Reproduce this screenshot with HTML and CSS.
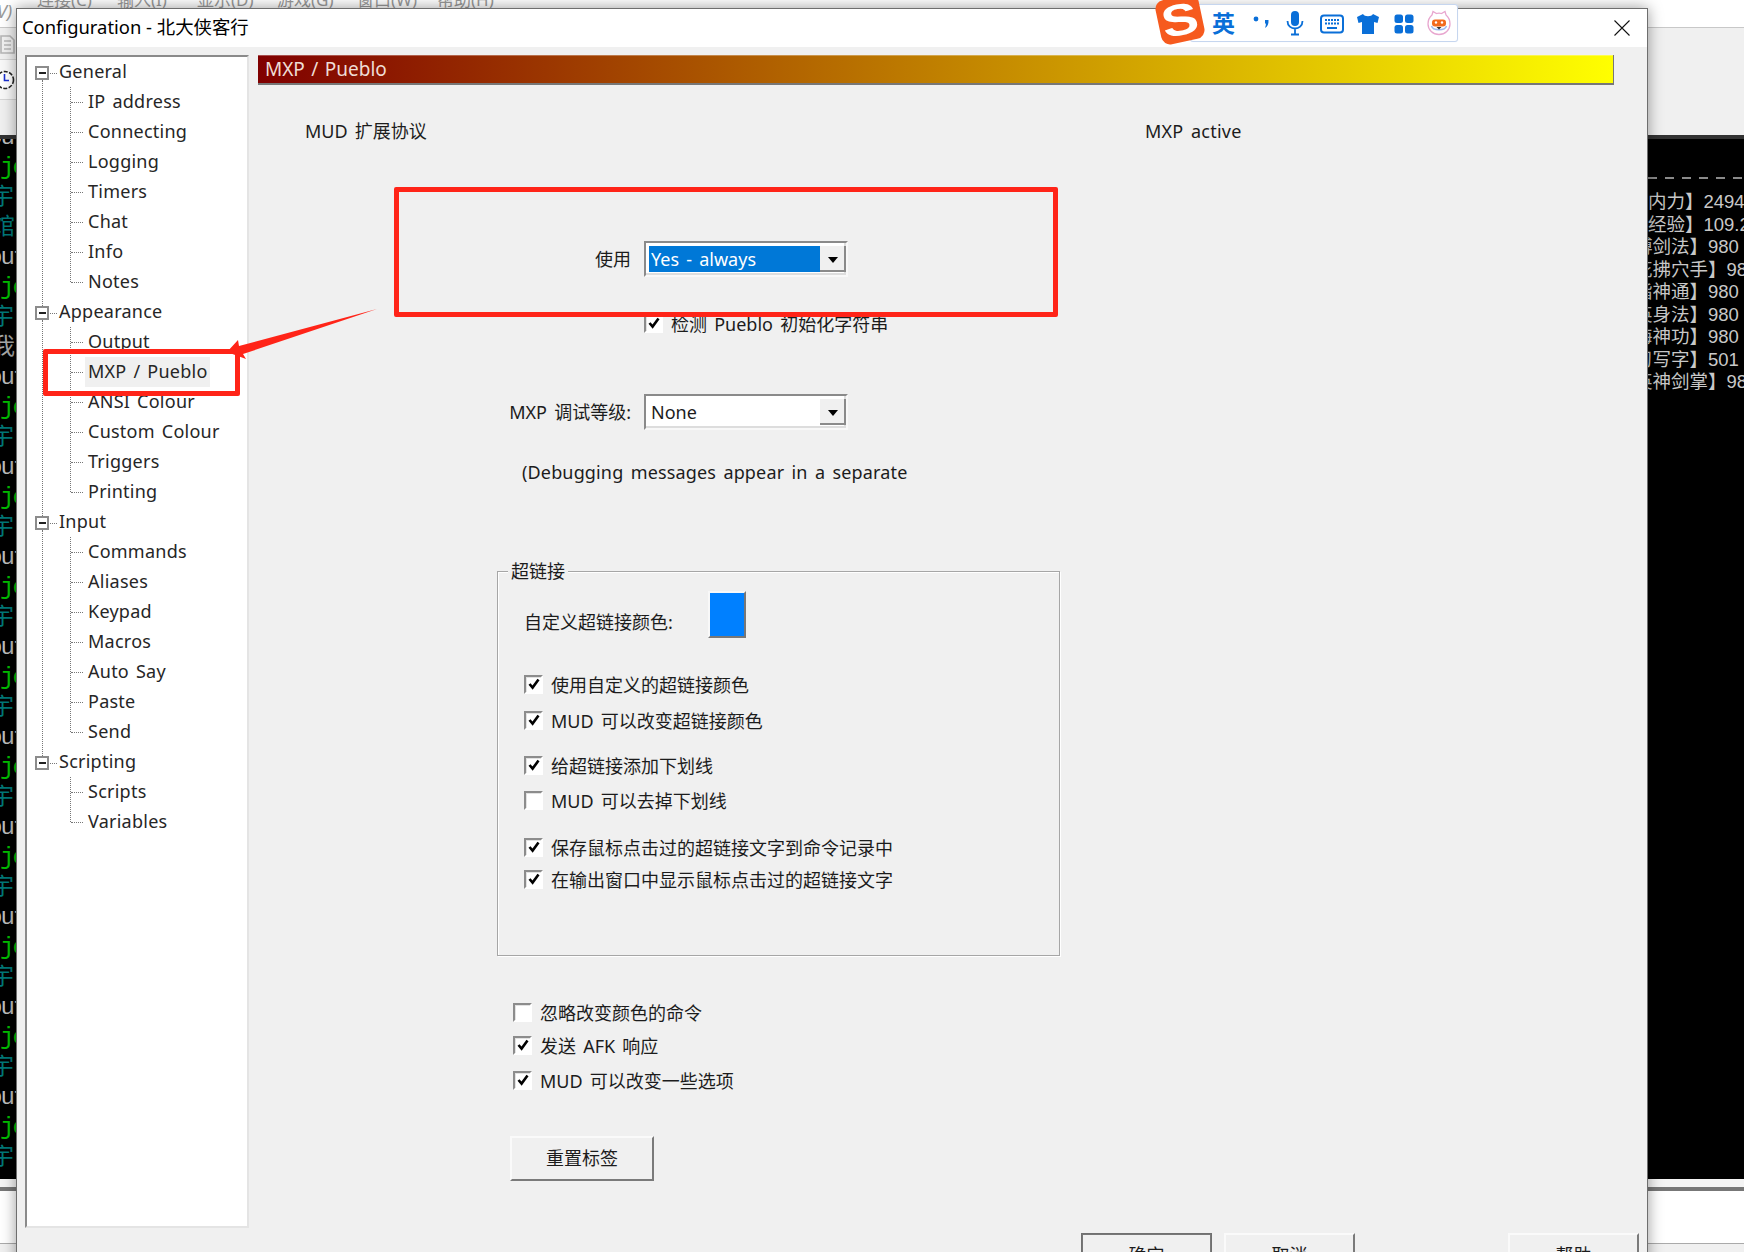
FILE: index.html
```html
<!DOCTYPE html>
<html lang="zh">
<head>
<meta charset="utf-8">
<title>Configuration - 北大侠客行</title>
<link rel="stylesheet" href="styles.css">
</head>
<body>
<svg class="defs" width="0" height="0" aria-hidden="true">
  <symbol id="tick" viewBox="0 0 14 14"><path d="M2.5 7 L5.6 10.6 L11.5 2.6" fill="none" stroke="#000" stroke-width="2.6"/></symbol>
</svg>
<div class="app">
  <div class="bg">
    <div class="menubar">
      <div class="menu-corner">V)</div>
      <div class="menu-items"><span>连接(C)</span><span>输入(I)</span><span>显示(D)</span><span>游戏(G)</span><span>窗口(W)</span><span>帮助(H)</span></div>
    </div>
    <div class="toolbar">
      <div class="tool-row tool-row-a"><svg width="16" height="22" viewBox="0 0 16 22"><path d="M1 3h9l4 4v13H1zM4 8h7M4 12h7M4 16h7" fill="none" stroke="#b5b5b5" stroke-width="1.6"/></svg></div>
      <div class="tool-row tool-row-b"><svg width="16" height="30" viewBox="0 0 16 30"><circle cx="5" cy="15" r="8.5" fill="#fff" stroke="#222" stroke-width="1.6" stroke-dasharray="4 1.5"/><path d="M4.5 9v6.500h4.500" fill="none" stroke="#1a2fd0" stroke-width="1.6"/></svg></div>
      <div class="tool-row tool-row-c"></div>
    </div>
    <div class="terminal">
      <div class="term-left">
        <div class="tl u">out</div><div class="tl j">jo</div><div class="tl c">宗宇</div><div class="tl c">馆</div>
        <div class="tl u">out</div><div class="tl j">jo</div><div class="tl c">宗宇</div><div class="tl w">我</div>
        <div class="tl u">out</div><div class="tl j">jo</div><div class="tl c">宗宇</div>
        <div class="tl u">out</div><div class="tl j">jo</div><div class="tl c">宗宇</div>
        <div class="tl u">out</div><div class="tl j">jo</div><div class="tl c">宗宇</div>
        <div class="tl u">out</div><div class="tl j">jo</div><div class="tl c">宗宇</div>
        <div class="tl u">out</div><div class="tl j">jo</div><div class="tl c">宗宇</div>
        <div class="tl u">out</div><div class="tl j">jo</div><div class="tl c">宗宇</div>
        <div class="tl u">out</div><div class="tl j">jo</div><div class="tl c">宗宇</div>
        <div class="tl u">out</div><div class="tl j">jo</div><div class="tl c">宗宇</div>
        <div class="tl u">out</div><div class="tl j">jo</div><div class="tl c">宗宇</div>
      </div>
      <div class="term-right">
        <div class="term-dash"></div>
        <div class="tr">内力】2494</div>
        <div class="tr">经验】109.2</div>
        <div class="tr tr-shift">博剑法】980</div>
        <div class="tr tr-shift">花拂穴手】98</div>
        <div class="tr tr-shift">指神通】980</div>
        <div class="tr tr-shift">英身法】980</div>
        <div class="tr tr-shift">海神功】980</div>
        <div class="tr tr-shift">习写字】501</div>
        <div class="tr tr-shift">英神剑掌】98</div>
      </div>
    </div>
    <div class="inputbar"></div>
    <div class="statusbar"></div>
  </div>

  <div class="dialog">
    <div class="titlebar">
      <span class="title">Configuration - 北大侠客行</span>
      <svg class="close" width="16" height="16" viewBox="0 0 16 16"><path d="M.5.500l15 15M15.500.500l-15 15" stroke="#111" stroke-width="1.100" fill="none"/></svg>
    </div>
    <div class="dlg-body">
      <ul class="tree">
        <li class="node"><div class="row top"><i class="exp"></i>General</div>
          <ul class="kids">
            <li class="row kid">IP address</li><li class="row kid">Connecting</li><li class="row kid">Logging</li><li class="row kid">Timers</li><li class="row kid">Chat</li><li class="row kid">Info</li><li class="row kid">Notes</li>
          </ul>
        </li>
        <li class="node"><div class="row top"><i class="exp"></i>Appearance</div>
          <ul class="kids">
            <li class="row kid">Output</li><li class="row kid"><span class="sel">MXP / Pueblo</span></li><li class="row kid">ANSI Colour</li><li class="row kid">Custom Colour</li><li class="row kid">Triggers</li><li class="row kid">Printing</li>
          </ul>
        </li>
        <li class="node"><div class="row top"><i class="exp"></i>Input</div>
          <ul class="kids">
            <li class="row kid">Commands</li><li class="row kid">Aliases</li><li class="row kid">Keypad</li><li class="row kid">Macros</li><li class="row kid">Auto Say</li><li class="row kid">Paste</li><li class="row kid">Send</li>
          </ul>
        </li>
        <li class="node"><div class="row top"><i class="exp"></i>Scripting</div>
          <ul class="kids">
            <li class="row kid">Scripts</li><li class="row kid">Variables</li>
          </ul>
        </li>
      </ul>

      <div class="panel">
        <div class="banner">MXP / Pueblo</div>
        <div class="head-row"><span class="head-a">MUD 扩展协议</span><span class="head-b">MXP active</span></div>
        <div class="field field-use">
          <label class="field-label">使用</label>
          <div class="combo"><span class="combo-val combo-sel">Yes - always</span><span class="combo-btn"></span></div>
        </div>
        <div class="check check-pueblo"><span class="box"><svg class="tick"><use href="#tick"/></svg></span>检测 Pueblo 初始化字符串</div>
        <div class="field field-debug">
          <label class="field-label">MXP 调试等级:</label>
          <div class="combo"><span class="combo-val">None</span><span class="combo-btn"></span></div>
        </div>
        <div class="note">(Debugging messages appear in a separate</div>

        <div class="group">
          <div class="legend">超链接</div>
          <div class="swatch-row"><span class="swatch-label">自定义超链接颜色:</span><span class="swatch"></span></div>
          <div class="check g1"><span class="box"><svg class="tick"><use href="#tick"/></svg></span>使用自定义的超链接颜色</div>
          <div class="check g2"><span class="box"><svg class="tick"><use href="#tick"/></svg></span>MUD 可以改变超链接颜色</div>
          <div class="check g3"><span class="box"><svg class="tick"><use href="#tick"/></svg></span>给超链接添加下划线</div>
          <div class="check g4"><span class="box"></span>MUD 可以去掉下划线</div>
          <div class="check g5"><span class="box"><svg class="tick"><use href="#tick"/></svg></span>保存鼠标点击过的超链接文字到命令记录中</div>
          <div class="check g6"><span class="box"><svg class="tick"><use href="#tick"/></svg></span>在输出窗口中显示鼠标点击过的超链接文字</div>
        </div>

        <div class="check b1"><span class="box"></span>忽略改变颜色的命令</div>
        <div class="check b2"><span class="box"><svg class="tick"><use href="#tick"/></svg></span>发送 AFK 响应</div>
        <div class="check b3"><span class="box"><svg class="tick"><use href="#tick"/></svg></span>MUD 可以改变一些选项</div>

        <div class="btn btn-reset">重置标签</div>
        <div class="footer">
          <div class="btn btn-foot btn-default">确定</div>
          <div class="btn btn-foot">取消</div>
          <div class="btn btn-foot btn-help">帮助</div>
        </div>
      </div>
    </div>
  </div>

  <div class="ime">
    <div class="ime-logo"><span>S</span></div>
    <span class="ime-ying">英</span>
    <svg class="ime-ic ic-punc" width="18" height="20" viewBox="0 0 18 20"><circle cx="4" cy="8" r="2.400" fill="#0a6fd8"/><path d="M13 9h3.500c.3 4-1 6.500-3.500 8 .8-2 1-3.500 .8-4.500H13z" fill="#0a6fd8"/></svg>
    <svg class="ime-ic ic-mic" width="20" height="26" viewBox="0 0 20 26"><rect x="6" y="1" width="8" height="15" rx="4" fill="#0a6fd8"/><path d="M2.500 11c0 10 15 10 15 0M10 19v5M6 24.500h8" fill="none" stroke="#0a6fd8" stroke-width="1.800"/></svg>
    <svg class="ime-ic ic-kbd" width="24" height="20" viewBox="0 0 24 20"><rect x="1" y="1.500" width="22" height="17" rx="3" fill="#fff" stroke="#0a6fd8" stroke-width="2"/><path d="M5 6h14M5 9.500h14" stroke="#0a6fd8" stroke-width="2" stroke-dasharray="2 1"/><path d="M7 14h10" stroke="#0a6fd8" stroke-width="2"/></svg>
    <svg class="ime-ic ic-shirt" width="24" height="22" viewBox="0 0 24 22"><path d="M7 1 L1 4 L2.500 10 L6 9 V21 H18 V9 L21.500 10 L23 4 L17 1 C15.500 4 8.500 4 7 1Z" fill="#0a6fd8"/></svg>
    <svg class="ime-ic ic-grid" width="20" height="20" viewBox="0 0 20 20"><rect x="0.500" y="0.500" width="8.500" height="8.500" rx="2.500" fill="#0a6fd8"/><rect x="11" y="0.500" width="8.500" height="8.500" rx="2.500" fill="#0a6fd8"/><rect x="0.500" y="11" width="8.500" height="8.500" rx="2.500" fill="#0a6fd8"/><rect x="11" y="11" width="8.500" height="8.500" rx="2.500" fill="#0a6fd8"/></svg>
    <svg class="ime-ic ic-face" width="24" height="26" viewBox="0 0 24 26"><path d="M5 5 L6 1.500 L9.500 3.500 C11 3 13 3 14.500 3.500 L18 1.500 L19 5 C22 7.500 23 10.500 23 14 C23 20 18 24.500 12 24.500 C6 24.500 1 20 1 14 C1 10.500 2 7.500 5 5Z" fill="#fff" stroke="#e8a6cf" stroke-width="1.300"/><path d="M4.500 16 C6 21 18 21 19.500 16" fill="none" stroke="#9db8f0" stroke-width="1.500"/><rect x="5" y="9.500" width="14" height="7" rx="3" fill="#f26b1d"/><circle cx="9" cy="12.500" r="1.200" fill="#fff"/><circle cx="15" cy="12.500" r="1.200" fill="#fff"/><path d="M9.500 17h5l-2.500 2.500z" fill="#333"/></svg>
  </div>

  <div class="mark mark-combo"></div>
  <div class="mark mark-tree"></div>
  <svg class="arrow" width="160" height="60" viewBox="0 0 160 60"><path d="M151 1 L17 46 L20 51 L1 44 L12 32 L13 38 Z" fill="#ff2418"/></svg>
</div>
</body>
</html>
```
FILE: styles.css
```css
* { box-sizing: border-box; }
html, body { margin: 0; padding: 0; }
body { font-family: "Noto Sans", "Noto Sans CJK SC", sans-serif; font-size: 18px; word-spacing: 2.500px; color: #1c1c1c; background: #fff; }
.defs { position: absolute; }
ul { list-style: none; margin: 0; padding: 0; }

.app { position: relative; width: 1744px; height: 1252px; overflow: hidden; background: #f0f0f0; }

/* background application */
.bg { display: flex; flex-direction: column; height: 100%; }
.menubar { height: 28px; background: #fff; border-bottom: 1px solid #c8c8c8; overflow: hidden; position: relative; flex: none; }
.menu-items { display: flex; gap: 24px; margin: -12px 0 0 37px; font-size: 17px; line-height: 24px; color: #999; }
.menu-items span { width: 56px; white-space: nowrap; }
.menu-corner { position: absolute; left: -3px; top: 0; font-size: 18px; line-height: 22px; color: #9a9a9a; font-style: italic; }
.toolbar { height: 107px; background: #f0f0f0; flex: none; }
.tool-row { width: 16px; overflow: hidden; display: flex; align-items: center; border-bottom: 1px solid #d6d6d6; }
.tool-row-a { height: 32px; }
.tool-row-b { height: 40px; background: #f8f8f8; }
.tool-row-c { height: 35px; border-bottom: 0; }

.terminal { height: 1044px; background: #000; display: flex; justify-content: space-between; border-top: 4px solid #333; overflow: hidden; flex: none; }
.term-left { width: 16px; overflow: hidden; margin-top: -16px; font-family: "Liberation Mono", "Noto Sans CJK SC", monospace; font-size: 24px; word-spacing: 0; }
.tl { height: 30px; line-height: 30px; white-space: nowrap; letter-spacing: -2px; }
.u { color: #bdbdbd; margin-left: -12px; }
.j { color: #00c000; }
.c { color: #007878; font-size: 23px; letter-spacing: 0; margin-left: -32px; }
.w { color: #a8a8a8; margin-left: -8px; font-size: 23px; letter-spacing: 0; }
.c:nth-child(4) { margin-left: -8px; }
.term-right { width: 96px; overflow: hidden; font-family: "Liberation Sans", "Noto Sans CJK SC", sans-serif; font-size: 18.500px; color: #c8c8c8; word-spacing: 0; }
.term-dash { height: 2px; margin-top: 38px; margin-bottom: 12px; background: repeating-linear-gradient(90deg, #8a8a8a 0 9px, transparent 9px 17px); }
.tr { height: 22.500px; line-height: 22.500px; white-space: nowrap; }
.tr-shift { margin-left: -14px; }

.inputbar { height: 12px; flex: none; background: #f4f4f4; border-bottom: 4px solid #777; }
.statusbar { height: 53px; flex: none; background: #fff; border-bottom: 1px solid #aaa; }

/* dialog window */
.dialog { position: absolute; left: 16px; top: 8px; width: 1632px; height: 1320px; background: #f0f0f0; border: 1px solid #6e6e6e; border-bottom: 0; box-shadow: 0 0 14px rgba(0,0,0,.4); }
.titlebar { height: 38px; background: #fff; display: flex; align-items: center; padding: 0 17px 0 5px; justify-content: space-between; }
.title { font-size: 18.400px; color: #000; white-space: nowrap; word-spacing: 0; margin-top: -4px; }
.dlg-body { display: flex; align-items: flex-start; background: #f0f0f0; }

/* tree */
.tree { margin: 8px 0 0 8px; width: 224px; height: 1173px; background: #fff; border: 2px solid #fff; border-left-color: #8a8a8a; border-top-color: #8a8a8a; border-right-color: #e4e4e4; border-bottom-color: #e4e4e4; flex: none; color: #262626; letter-spacing: .25px; word-spacing: 2px; }
.node { position: relative; }
.node:not(:last-child)::before { content: ""; position: absolute; left: 15px; top: 23px; bottom: -9px; border-left: 1px dotted #777; }
.row { height: 30px; line-height: 28px; white-space: nowrap; position: relative; }
.top { padding-left: 32px; }
.exp { position: absolute; left: 8px; top: 9px; width: 14px; height: 14px; border: 2px solid #8c8c8c; background: #fff; }
.exp::before { content: ""; position: absolute; left: 1.500px; top: 3.500px; width: 7px; height: 2px; background: #222; }
.exp::after { content: ""; position: absolute; left: 13px; top: 5px; width: 7px; border-top: 1px dotted #777; }
.kids { position: relative; }
.kids::before { content: ""; position: absolute; left: 43px; top: 0; bottom: 15px; border-left: 1px dotted #777; }
.kid { padding-left: 61px; }
.kid::before { content: ""; position: absolute; left: 44px; top: 15px; width: 12px; border-top: 1px dotted #777; }
.sel { display: inline-block; background: #f0f0f0; margin-left: -3px; padding: 0 3px; width: 125px; height: 30px; }

/* right panel */
.panel { margin: 8px 0 0 9px; width: 1356px; flex: none; }
.banner { height: 30px; line-height: 28px; padding-left: 7px; color: #efddd5; font-size: 19px; word-spacing: 1.500px; background: linear-gradient(90deg, #800000, #ffff00); box-shadow: inset 0 -2px 0 #777, inset -1px 0 0 #777, inset 0 1px 0 rgba(255,255,255,.3); }
.head-row { display: flex; margin-top: 35px; line-height: 22px; height: 24px; }
.head-a { width: 840px; margin-left: 47px; }
.head-b { letter-spacing: .25px; }
.field { display: flex; align-items: center; height: 36px; }
.field-label { width: 373px; text-align: right; margin-right: 13px; line-height: 24px; }
.field-use { margin-top: 97px; }
.field-debug { margin-top: 59px; }
.combo { width: 204px; height: 36px; display: flex; padding: 3px 0 3px 3px; background: #fff; border: 2px solid #8a8a8a; border-right-color: #f8f8f8; border-bottom-color: #f8f8f8; box-shadow: inset -2px -2px 0 #ddd; }
.combo-val { flex: 1; line-height: 26px; padding-left: 2px; background: #fff; }
.combo-sel { background: #0078d7; color: #fff; }
.combo-btn { width: 26px; position: relative; background: #f0f0f0; border-right: 2px solid #8a8a8a; border-bottom: 2px solid #8a8a8a; }
.combo-btn::after { content: ""; position: absolute; left: 8px; top: 11px; border: 5px solid transparent; border-top: 6px solid #000; border-bottom: 0; }
.check { display: flex; align-items: center; height: 24px; white-space: nowrap; }
.box { width: 19px; height: 19px; flex: none; margin-right: 8px; background: #fff; border: 2px solid #fff; border-left-color: #8c8c8c; border-top-color: #8c8c8c; display: flex; align-items: center; justify-content: center; box-shadow: inset 1px 1px 0 #e2e2e2; }
.tick { width: 14px; height: 14px; }
.check-pueblo { margin: 34px 0 0 386px; }
.note { margin: 31px 0 0 264px; line-height: 22px; height: 24px; white-space: nowrap; letter-spacing: .15px; }

.group { position: relative; width: 563px; height: 385px; margin: 86px 0 0 239px; padding-left: 26px; border: 1px solid #a6a6a6; box-shadow: 1px 1px 0 #fff, inset 1px 1px 0 #fff; }
.legend { position: absolute; left: 10px; top: -13px; padding: 0 3px; background: #f0f0f0; line-height: 24px; }
.swatch-row { display: flex; align-items: flex-start; margin-top: 19px; height: 47px; }
.swatch-label { width: 184px; margin-top: 19px; line-height: 24px; white-space: nowrap; }
.swatch { width: 38px; height: 47px; background: #0080ff; border: 2px solid #f8f8f8; border-right-color: #777; border-bottom-color: #777; }
.g1 { margin-top: 34px; }
.g2 { margin-top: 12px; }
.g3 { margin-top: 21px; }
.g4 { margin-top: 11px; }
.g5 { margin-top: 23px; }
.g6 { margin-top: 8px; }
.b1 { margin: 44px 0 0 255px; }
.b2 { margin: 9px 0 0 255px; }
.b3 { margin: 11px 0 0 255px; }

.btn { display: flex; align-items: center; justify-content: center; height: 45px; width: 131px; flex: none; padding-bottom: 3px; background: #f0f0f0; border: 2px solid #fafafa; border-right-color: #7a7a7a; border-bottom-color: #7a7a7a; }
.btn-reset { width: 144px; margin: 44px 0 0 252px; }
.footer { display: flex; gap: 12px; margin: 52px 0 0 823px; }
.btn-default { outline: 1px solid #707070; outline-offset: -1px; border-top-color: #777; border-left-color: #777; }
.btn-help { margin-left: 141px; }

/* floating IME bar */
.ime { position: absolute; left: 1190px; top: 4px; width: 268px; height: 38px; background: #fff; border: 1px solid #c6d6ef; border-radius: 3px; box-shadow: 0 0 1px #dbe6f6; }
.ime-logo { position: absolute; left: -33px; top: -8px; width: 44px; height: 45px; background: #f65a1e; border-radius: 9px; transform: rotate(-12deg); display: flex; align-items: center; justify-content: center; overflow: hidden; }
.ime-logo span { font-family: "Liberation Sans", sans-serif; font-weight: 700; font-size: 44px; line-height: 44px; color: #fff; transform: scaleX(1.250); }
.ime-ying { position: absolute; left: 21px; top: 3px; font-size: 23px; line-height: 30px; font-weight: 700; color: #0a6fd8; }
.ime-ic { position: absolute; }
.ic-punc { left: 61px; top: 6px; }
.ic-mic { left: 94px; top: 5px; }
.ic-kbd { left: 129px; top: 9px; }
.ic-shirt { left: 165px; top: 8px; }
.ic-grid { left: 203px; top: 9px; }
.ic-face { left: 236px; top: 5px; }

/* screenshot annotations */
.mark { position: absolute; border: 5px solid #ff2418; border-radius: 2px; }
.mark-combo { left: 394px; top: 187px; width: 664px; height: 130px; }
.mark-tree { left: 43px; top: 349px; width: 197px; height: 47px; }
.arrow { position: absolute; left: 226px; top: 308px; }
```
